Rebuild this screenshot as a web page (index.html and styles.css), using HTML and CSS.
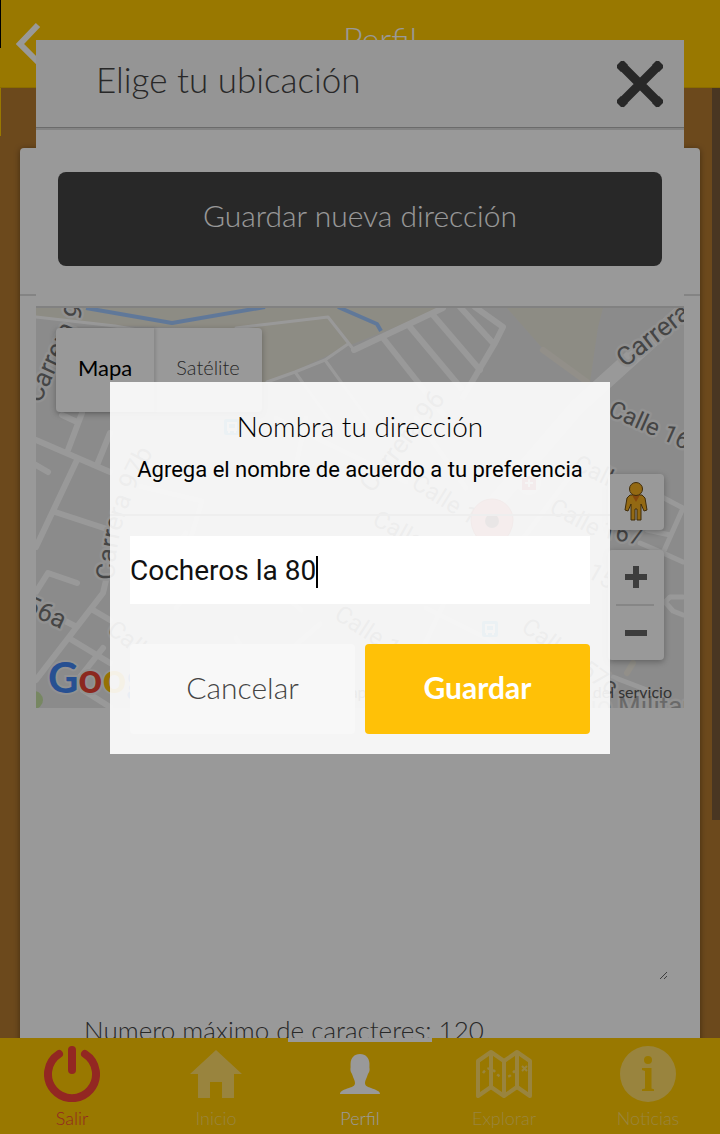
FILE: index.html
```html
<!DOCTYPE html>
<html lang="es">
<head>
<meta charset="utf-8">
<meta name="viewport" content="width=device-width, initial-scale=1">
<title>Perfil</title>
<link rel="stylesheet" href="styles.css">
</head>
<body>
<div class="app">
  <header class="bar">
    <button class="bar-back" type="button" aria-label="Volver">
      <svg width="32" height="44" viewBox="0 0 32 44" fill="none" stroke="currentColor" stroke-width="6"><path d="M22 3 4 22l19 19"/></svg>
    </button>
    <h1 class="bar-title">Perfil</h1>
  </header>

  <main class="page">
    <section class="card">
      <div class="card-head"></div>
      <div class="card-body">
        <textarea class="card-text" aria-label="Descripción" maxlength="120"></textarea>
        <p class="card-count">Numero máximo de caracteres: 120</p>
      </div>
    </section>
    <div class="scroll-thumb"></div>
  </main>

  <nav class="tabs">
    <a class="tab tab-exit" href="#salir">
      <svg class="tab-icon" viewBox="0 0 56 56" fill="none" stroke="currentColor" stroke-width="8" stroke-linecap="round"><path d="M28 4v20M15 8A24 24 0 1 0 41 8"/></svg>
      <span>Salir</span>
    </a>
    <a class="tab" href="#inicio">
      <svg class="tab-icon" viewBox="0 0 56 56" fill="currentColor"><path d="M28 4 54 28H46V52H34V36H22V52H10V28H2z"/></svg>
      <span>Inicio</span>
    </a>
    <a class="tab tab-active" href="#perfil">
      <svg class="tab-icon" viewBox="0 0 56 56" fill="currentColor"><path d="M28 8c6 0 9 4 9.400 9 .2 3-.2 4 .2 6 .2 3-1.600 4-2 6-.6 3-2.600 5-2.600 8 0 3 3 4 6 5 5 2 9 3 9 6H8c0-3 4-4.500 9-6 3-1 6-2 6-5 0-3-2-5-2.600-8-.4-2-2.200-3-2-6 .4-2 0-3 .2-6C19 12 22 8 28 8z"/></svg>
      <span>Perfil</span>
    </a>
    <a class="tab" href="#explorar">
      <svg class="tab-icon" viewBox="0 0 56 56" fill="none" stroke="currentColor" stroke-width="4" stroke-linejoin="round"><path d="M2 15 15 6l13 9 13-9 13 9v35l-13-9-13 9-13-9-13 9zM15 6v35M28 15v35M41 6v35"/><path d="M7 27c5-7 9-5 13 0s10 6 15 2c3-3 4-5 7-6" stroke-width="2.500" stroke-dasharray="3 3"/><path d="m46 20 5 5m0-5-5 5" stroke-width="2"/></svg>
      <span>Explorar</span>
    </a>
    <a class="tab" href="#noticias">
      <svg class="tab-icon" viewBox="0 0 56 56" fill="currentColor"><path fill-rule="evenodd" d="M28 0a28 28 0 1 0 0 56 28 28 0 0 0 0-56zM28 10a4 4 0 1 1 0 8 4 4 0 0 1 0-8zM22 22h9.500v20.500l2.500.7V45H22v-1.800l3-.7V25l-3-1z"/></svg>
      <span>Noticias</span>
    </a>
  </nav>

  <section class="sheet" aria-label="Elige tu ubicación">
    <header class="sheet-head">
      <h2 class="sheet-title">Elige tu ubicación</h2>
      <button class="sheet-close" type="button" aria-label="Cerrar">
        <svg width="48" height="48" viewBox="0 0 48 48" fill="none" stroke="currentColor" stroke-width="9" stroke-linejoin="round"><path d="M4 4l40 40M44 4 4 44"/><path fill="currentColor" stroke="none" d="M5 1 1 5v3l4 4 7-7-4-4zM43 1l4 4v3l-4 4-7-7 4-4zM5 47l-4-4v-3l4-4 7 7-4 4zM43 47l4-4v-3l-4-4-7 7 4 4z"/></svg>
      </button>
    </header>
    <div class="sheet-action">
      <button class="save-address" type="button">Guardar nueva dirección</button>
    </div>
    <div class="map">
      <svg class="map-art" viewBox="0 0 648 400" preserveAspectRatio="xMidYMid slice">
        <rect width="648" height="400" fill="#e8e8e8"/>
        <path fill="#ece9dc" d="M0 0h407L312 38l-81 38-60 20V20L79 18 0 9zM471 0h96l-5 19-8 55-46-32z"/>
        <circle cx="-2" cy="392" r="9" fill="#c6e2a4"/>
        <path d="m50 0 86 15 93-16M302-1l39 17 4 7" fill="none" stroke="#a1c9ff" stroke-width="4" stroke-linejoin="round"/>
        <path d="m507 42 44 32M597 355l-6 10" fill="none" stroke="#f3efe4" stroke-width="6" stroke-linecap="round"/>
        <g fill="none" stroke="#fff" stroke-linejoin="round" stroke-linecap="round">
          <path stroke-width="3" d="m0 9 79 9 45 8M200 20l92-11 26 33M312 36l-23 16-30 12-28 10M289 52l45 62M259 64l45 62"/>
          <path stroke-width="6" d="m318 42 89-42M347 30l60 76M374 19l51 61M397 7l47 55M424-1l33 36M439-1l28 20-8 16-32 54"/>
          <path stroke-width="16" d="M652-1 541 99 450 205"/>
          <path stroke-width="6" d="m0 132 74 32M46 105 32 142M26 107l15 7M74 125l-13 32M41 152 0 239M19 204l55 18M0 157l12 7M0 284l12-19 29 10M71 268l-4 17L0 372M57 302l17 10M36 332l38 23M21 309l20 10M67 340 44 369M47 382l27 17"/>
          <path stroke-width="5" d="m626 189 21 11-20 45 20 9M611 222l23 5M604 235l23 10M647 289h-13l-5 5 8 9 10 4M577 369l34 13"/>
          <path stroke-width="5" d="m90 175 76 18-14 46M150 225l-50 60M195 240l70 62M140 300l28-36 66 26M200 330l24 38 60-52M240 110l130 64M270 110l-10 48M380 110l50 70M450 205l-70 150M390 300l60 30 90 60M540 160l-90 120"/>
        </g>
        <g class="map-names">
          <text transform="translate(4 96) rotate(-65)">Carrera 96b</text>
          <path id="street-curve" d="M79 272Q77 215 119 142" fill="none" stroke="none"/>
          <text><textPath href="#street-curve">Carrera 97b</textPath></text>
          <text transform="translate(336 186) rotate(-52)">Carrera 96</text>
          <text transform="translate(589 60) rotate(-38)">Carrera 93</text>
          <g class="map-lanes">
            <text transform="translate(571 107) rotate(24)">Calle 163</text>
            <text transform="translate(536 161) rotate(26)">Calle 16</text>
            <text transform="translate(512 204) rotate(28)">Calle</text>
            <text transform="translate(565 229) rotate(12)">167</text>
            <text transform="translate(374 179) rotate(32)">Calle 159</text>
            <text transform="translate(335 216) rotate(29)">Calle 158</text>
            <text transform="translate(498 240) rotate(29)">Calle 157</text>
            <text transform="translate(297 310) rotate(33)">Calle 157a</text>
            <text transform="translate(484 322) rotate(36)">Calle 157c</text>
            <text transform="translate(70 324) rotate(38)">Calle</text>
          </g>
          <text transform="translate(-14 303) rotate(25)">56a</text>
          <text class="map-place" x="488" y="407">Colegio Militar</text>
        </g>
        <g fill="#5bc0e8">
          <rect x="188" y="111" width="16" height="16" rx="2"/><rect x="446" y="313" width="16" height="16" rx="2"/>
        </g>
        <path fill="#fff" d="M191 114h10v9h-1v2h-2v-2h-4v2h-2v-2h-1zM449 316h10v9h-1v2h-2v-2h-4v2h-2v-2h-1z"/>
        <path fill="#5bc0e8" d="M193 116h6v4h-6zM451 318h6v4h-6z"/>
        <circle cx="493" cy="175" r="12" fill="#fff"/>
        <path fill="#e0546a" d="M486 170h4v-2h6v2h4v12h-14z"/><path d="M493 171v8m-4-4h8" stroke="#fff" stroke-width="2"/>
        <path fill="#f7837c" stroke="#c94f4a" d="M456 258c0-18-21-27-21-46a21 21 0 0 1 42 0c0 19-21 28-21 46z"/>
        <circle cx="456" cy="213" r="7" fill="#40100e"/>
        <text class="map-logo" x="12" y="385"><tspan fill="#4285f4">G</tspan><tspan fill="#ea4335">o</tspan><tspan fill="#fbbc05">o</tspan><tspan fill="#4285f4">g</tspan><tspan fill="#34a853">l</tspan><tspan fill="#ea4335">e</tspan></text>
        <text class="map-terms" x="636" y="390" text-anchor="end">Datos de mapas ©2016 Google &#160; Condiciones del servicio</text>
      </svg>
      <div class="map-types">
        <button class="map-type map-type-on" type="button">Mapa</button>
        <button class="map-type" type="button">Satélite</button>
      </div>
      <div class="map-tools">
        <button class="map-tool map-man" type="button" aria-label="Street View">
          <svg width="24" height="40" viewBox="0 0 24 40" stroke="#6b4a10" stroke-width="1"><path fill="#f5b021" d="M6 13h12l3 3 2 12-3 1-3-7v16h-4V27h-2v11H7V22l-3 7-3-1 2-12z"/><path fill="#df7818" stroke="none" d="M8 13h8l-4 7z"/><circle cx="12" cy="7" r="6.500" fill="#f5b021"/></svg>
        </button>
        <div class="map-zoom">
          <button class="map-tool" type="button" aria-label="Acercar"><svg width="22" height="22" viewBox="0 0 22 22" stroke="#666" stroke-width="6"><path d="M11 0v22M0 11h22"/></svg></button>
          <div class="map-rule"></div>
          <button class="map-tool" type="button" aria-label="Alejar"><svg width="22" height="22" viewBox="0 0 22 22" stroke="#666" stroke-width="6"><path d="M0 11h22"/></svg></button>
        </div>
      </div>
    </div>
  </section>

  <div class="backdrop">
    <form class="popup" role="dialog" aria-labelledby="popup-title">
      <div class="popup-head">
        <h3 class="popup-title" id="popup-title">Nombra tu dirección</h3>
        <label class="popup-label" for="address-name">Agrega el nombre de acuerdo a tu preferencia</label>
      </div>
      <div class="popup-field">
        <input class="popup-input" id="address-name" type="text" value="Cocheros la 80">
        <span class="popup-caret"></span>
      </div>
      <div class="popup-buttons">
        <button class="button" type="button">Cancelar</button>
        <button class="button button-main" type="submit">Guardar</button>
      </div>
    </form>
  </div>
</div>
</body>
</html>
```
FILE: styles.css
```css
* {
  box-sizing: border-box;
}

body {
  margin: 0;
  font-family: Lato, "Open Sans", sans-serif;
  font-weight: 300;
  color: #444;
}

button,
input,
textarea {
  margin: 0;
  padding: 0;
  border: 0;
  border-radius: 0;
  background: none;
  font: inherit;
  color: inherit;
}

h1,
h2,
h3,
p {
  margin: 0;
  font-weight: 300;
}

svg {
  display: block;
}

.app {
  position: relative;
  display: flex;
  flex-direction: column;
  height: 100vh;
  overflow: hidden;
  background: #b47a30;
}

/* Top bar */
.bar {
  position: relative;
  display: flex;
  align-items: center;
  height: 88px;
  padding: 0 8px 0 16px;
  background: #ffc900;
  border-bottom: 1px solid #e6b500;
  color: #fff;
}

.bar::before,
.bar::after {
  content: "";
  position: absolute;
  left: 0;
  width: 1px;
  height: 48px;
}

.bar::before {
  top: 0;
  background: #000;
}

.bar::after {
  top: 88px;
  background: #ffc900;
}

.bar-title {
  flex: 1;
  padding-bottom: 10px;
  text-align: center;
  font-size: 34px;
  line-height: 40px;
}

/* Profile page */
.page {
  position: relative;
  flex: 1;
  min-height: 0;
  overflow: hidden;
  padding: 60px 20px 0;
}

.card {
  background: #fff;
  border-radius: 4px;
  box-shadow: 0 1px 6px rgba(0, 0, 0, 0.4);
}

.card-head {
  height: 148px;
  border-bottom: 2px solid #ddd;
}

.card-body {
  padding: 32px;
}

.card-text {
  display: block;
  width: 100%;
  height: 652px;
  resize: vertical;
}

.card-count {
  padding: 32px;
  font-size: 26px;
  line-height: 36px;
}

.scroll-thumb {
  position: absolute;
  top: 0;
  right: 0;
  width: 8px;
  height: 732px;
  background: #7b5b3a;
}

/* Bottom tabs */
.tabs {
  display: flex;
  height: 96px;
  background: #ffc900;
}

.tab {
  flex: 1;
  display: flex;
  flex-direction: column;
  align-items: center;
  padding-top: 4px;
  border-top: 4px solid transparent;
  color: #ffdd68;
  text-decoration: none;
  font-size: 18px;
  line-height: 32px;
}

.tab-icon {
  width: 56px;
  height: 56px;
}

.tab-exit {
  color: #f54139;
}

.tab-active {
  border-top-color: #fff;
  color: #fff;
}

/* Location sheet */
.sheet {
  position: absolute;
  top: 40px;
  left: 5%;
  right: 5%;
  background: #fff;
}

.sheet-head {
  display: flex;
  align-items: center;
  justify-content: space-between;
  height: 88px;
  padding: 0 20px 0 60px;
  background: #f8f8f8;
  border-bottom: 1px solid #b2b2b2;
  box-shadow: 0 2px 0 #dcdcdc;
}

.sheet-title {
  padding-bottom: 10px;
  font-size: 35px;
  line-height: 40px;
}

.sheet-action {
  padding: 44px 22px 40px;
  border-bottom: 2px solid #d8d8d8;
}

.save-address {
  display: block;
  width: 100%;
  height: 94px;
  padding-bottom: 8px;
  border-radius: 8px;
  background: #444;
  color: #fff;
  font-size: 30px;
}

/* Map */
.map {
  position: relative;
  height: 400px;
  overflow: hidden;
}

.map-art {
  width: 100%;
  height: 100%;
}

.map-names {
  font-family: Roboto, sans-serif;
  font-weight: 400;
  font-size: 26px;
  fill: #737373;
  stroke: #f3f3f3;
  stroke-width: 5px;
  stroke-linejoin: round;
  paint-order: stroke;
}

.map-lanes {
  font-size: 24px;
}

.map-place {
  fill: #b0b0b0;
}

.map-logo {
  font-size: 42px;
  font-weight: 700;
  stroke: #f3f3f3;
  stroke-width: 4px;
  paint-order: stroke;
}

.map-terms {
  font-size: 16px;
  font-weight: 400;
  fill: #555;
}

.map-types {
  position: absolute;
  top: 20px;
  left: 20px;
  display: flex;
  border-radius: 4px;
  background: #fff;
  box-shadow: 0 2px 6px rgba(0, 0, 0, 0.3);
}

.map-type {
  height: 84px;
  padding: 0 22px 6px;
  font-size: 20px;
}

.map-type-on {
  color: #000;
  font-size: 22px;
  font-weight: 400;
  box-shadow: 2px 0 3px rgba(0, 0, 0, 0.12);
}

.map-tools {
  position: absolute;
  right: 20px;
  bottom: 48px;
  display: flex;
  flex-direction: column;
  gap: 20px;
}

.map-tool {
  display: flex;
  align-items: center;
  justify-content: center;
  width: 56px;
  height: 54px;
}

.map-man,
.map-zoom {
  border-radius: 4px;
  background: #fff;
  box-shadow: 0 2px 6px rgba(0, 0, 0, 0.3);
}

.map-man {
  height: 56px;
}

.map-rule {
  height: 2px;
  margin: 0 10px 0 8px;
  background: #e0e0e0;
}

/* Popup */
.backdrop {
  position: absolute;
  inset: 0;
  display: flex;
  align-items: center;
  justify-content: center;
  padding: 22px 20px 20px;
  background: rgba(0, 0, 0, 0.4);
}

.popup {
  width: 100%;
  max-width: 500px;
  background: rgba(255, 255, 255, 0.9);
  color: #000;
}

.popup-head {
  padding: 24px 16px 28px;
  border-bottom: 2px solid #eee;
  text-align: center;
}

.popup-title {
  font-size: 28px;
  line-height: 40px;
}

.popup-label {
  display: block;
  padding-top: 8px;
  font-family: Roboto, sans-serif;
  font-weight: 400;
  font-size: 22px;
  line-height: 32px;
}

.popup-field {
  position: relative;
  padding: 20px 20px 0;
}

.popup-input {
  display: block;
  width: 100%;
  height: 68px;
  background: #fff;
  color: #111;
  font-family: Roboto, sans-serif;
  font-weight: 400;
  font-size: 28px;
}

.popup-caret {
  position: absolute;
  top: 40px;
  left: 206px;
  width: 2px;
  height: 32px;
  background: #000;
}

.popup-buttons {
  display: flex;
  gap: 10px;
  padding: 40px 20px 20px;
}

.button {
  flex: 1;
  height: 90px;
  padding-bottom: 4px;
  border-radius: 4px;
  background: #f8f8f8;
  color: #444;
  font-size: 30px;
}

.button-main {
  background: #ffc107;
  color: #fff;
  font-weight: 700;
}
```
